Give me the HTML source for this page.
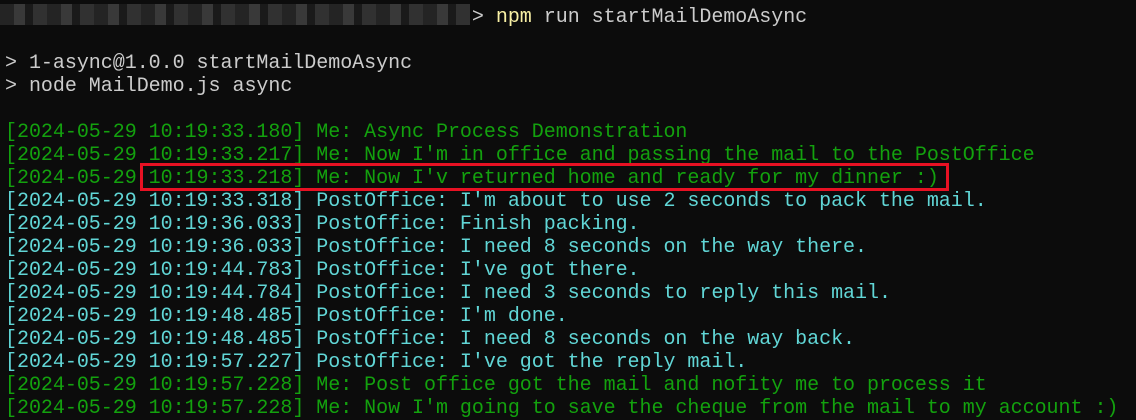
<!DOCTYPE html>
<html><head><style>
body{margin:0;background:#0c0c0c;width:1136px;height:420px;overflow:hidden;position:relative}
pre{margin:0;position:absolute;left:5px;top:6px;font-family:"Liberation Mono",monospace;font-size:20px;line-height:23px;color:#cccccc;letter-spacing:-0.03px}
.g{color:#13a10e}
.c{color:#61d6d6}
.y{color:#f9f1a5}
.blur{position:absolute;left:0;top:4px;height:21px;width:470px;background:repeating-linear-gradient(90deg,#2a2a2a 0 14px,#444 14px 25px,#1e1e1e 25px 33px,#3a3a3a 33px 47px);opacity:.8}
.box{position:absolute;left:140px;top:163px;width:803px;height:22px;border:3px solid #e81123}
</style></head><body>
<div class="blur"></div>
<pre>                                       &gt; <span class="y">npm</span> run startMailDemoAsync

&gt; 1-async@1.0.0 startMailDemoAsync
&gt; node MailDemo.js async

<span class="g">[2024-05-29 10:19:33.180] Me: Async Process Demonstration
[2024-05-29 10:19:33.217] Me: Now I'm in office and passing the mail to the PostOffice
[2024-05-29 10:19:33.218] Me: Now I'v returned home and ready for my dinner :)</span>
<span class="c">[2024-05-29 10:19:33.318] PostOffice: I'm about to use 2 seconds to pack the mail.
[2024-05-29 10:19:36.033] PostOffice: Finish packing.
[2024-05-29 10:19:36.033] PostOffice: I need 8 seconds on the way there.
[2024-05-29 10:19:44.783] PostOffice: I've got there.
[2024-05-29 10:19:44.784] PostOffice: I need 3 seconds to reply this mail.
[2024-05-29 10:19:48.485] PostOffice: I'm done.
[2024-05-29 10:19:48.485] PostOffice: I need 8 seconds on the way back.
[2024-05-29 10:19:57.227] PostOffice: I've got the reply mail.</span>
<span class="g">[2024-05-29 10:19:57.228] Me: Post office got the mail and nofity me to process it
[2024-05-29 10:19:57.228] Me: Now I'm going to save the cheque from the mail to my account :)</span></pre>
<div class="box"></div>
</body></html>
